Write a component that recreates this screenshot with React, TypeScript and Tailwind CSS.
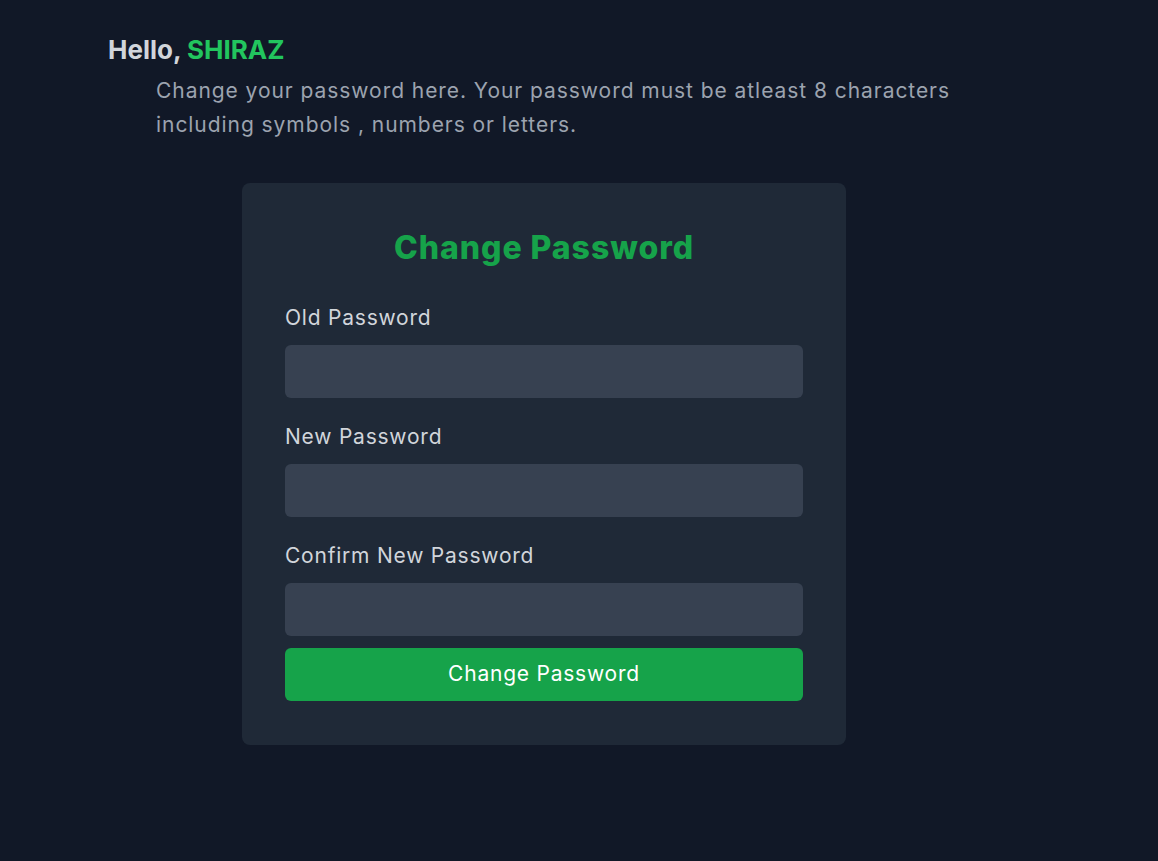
export default function App() {
  return (
    <div className="min-h-[861px] w-full bg-[#111827] font-['Inter',sans-serif] pl-[108px] pt-[34px]">
      <h1 className="text-[26px] leading-[32px] font-bold text-[#d1d5db]">
        Hello, <span className="text-[#22c55e]">SHIRAZ</span>
      </h1>
      <p className="ml-[48px] mt-[8px] w-[820px] text-[21px] leading-[34px] tracking-[0.045em] text-[#9ca3af]">
        Change your password here. Your password must be atleast 8 characters including symbols , numbers or letters.
      </p>
      <div className="ml-[134px] mt-[41px] w-[604px] rounded-lg bg-[#1f2937] px-[43px] pt-[43px] pb-[44px]">
        <h2 className="text-center text-[32px] leading-[44px] font-extrabold tracking-[0.03em] text-[#16a34a]">Change Password</h2>
        <div className="mt-[33px] flex flex-col text-[21px] leading-[28px] tracking-[0.037em]">
          <label className="pt-px text-[#d1d5db]">Old Password</label>
          <input type="password" className="mt-[13px] h-[53px] w-full rounded-md bg-[#374151] outline-none" />
          <label className="mt-[24px] pt-px text-[#d1d5db]">New Password</label>
          <input type="password" className="mt-[13px] h-[53px] w-full rounded-md bg-[#374151] outline-none" />
          <label className="mt-[24px] pt-px text-[#d1d5db]">Confirm New Password</label>
          <input type="password" className="mt-[13px] h-[53px] w-full rounded-md bg-[#374151] outline-none" />
          <button className="mt-[12px] h-[53px] w-full rounded-md bg-[#16a34a] pb-px text-white">Change Password</button>
        </div>
      </div>
    </div>
  );
}
